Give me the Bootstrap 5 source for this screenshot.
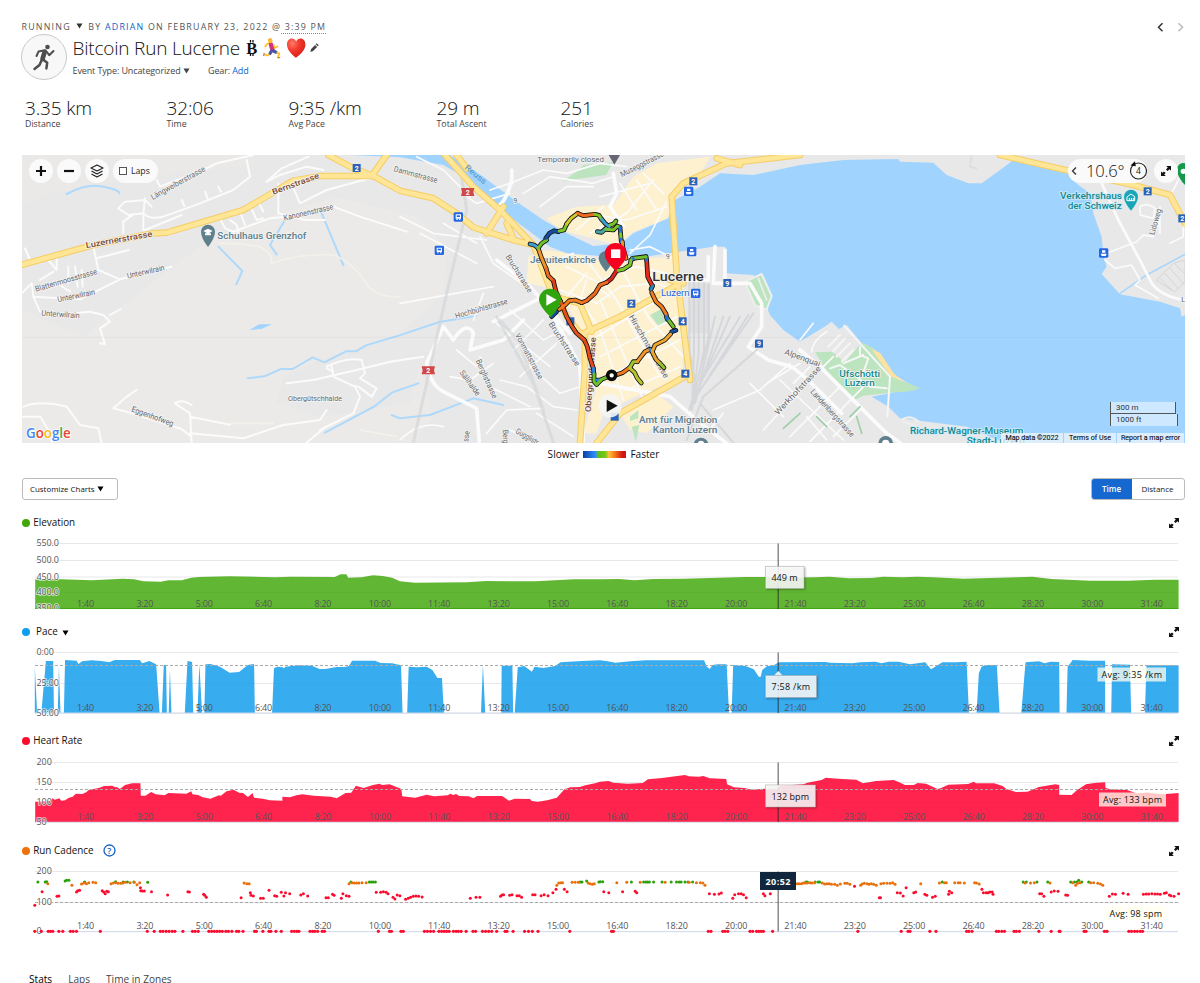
<!DOCTYPE html>
<html lang="en">
<head>
<meta charset="utf-8">
<title>Bitcoin Run Lucerne</title>
<meta name="viewport" content="width=device-width, initial-scale=1">
<link href="https://cdn.jsdelivr.net/npm/bootstrap@5.3.0/dist/css/bootstrap.min.css" rel="stylesheet">
<style>
body{font-family:"Open Sans",sans-serif;font-size:10px;color:#222;background:#fff;line-height:1.2;height:983px;overflow:hidden}
a{color:#1261c9;text-decoration:none}
svg{display:block}
.page{padding:0 15px 0 22px}
.meta-line{height:34px;padding-top:20px;font-size:8.9px;line-height:13px;letter-spacing:1.2px;color:#555;white-space:nowrap}
.meta-line .at{border-bottom:1px dotted #888}
.avatar{width:46px;height:46px;border:1.5px solid #c9c9c9;border-radius:50%;background:#f8f8f8;margin-left:-1px}
.run-title{font-size:19px;font-weight:300;letter-spacing:-.2px;line-height:26px;height:28px;color:#111;white-space:nowrap}
.run-title .tt{width:167.5px}
.run-title svg{flex-shrink:0}
.run-sub{font-size:9px;line-height:14px;letter-spacing:-.04em;color:#444;white-space:nowrap;letter-spacing:-.12px}
.totals{height:75px;padding:17px 0 0 3px}
.totals b{display:block;font-size:19px;font-weight:300;line-height:22px;letter-spacing:-.15px;color:#111}
.totals span{display:block;font-size:8.8px;line-height:11px;color:#444}
.t1{width:141.5px}.t2{width:122px}.t3{width:148px}.t4{width:124px}
.map-box{height:288px;overflow:hidden}
.map-ctl{left:6.5px;top:4px;gap:4px}
.map-ctl-r{right:7px;top:4px;gap:7px}
.disc{width:24px;height:24px;border-radius:50%;background:#fafafa}
.pill{height:24px;border-radius:12px;background:#fafafa}
.map-foot{right:1px;bottom:0;height:10px;font:7.1px/10px Roboto,sans-serif;color:#111;gap:1px;-webkit-text-stroke:.1px #111}
.map-foot span{background:rgba(240,245,250,.75);text-align:center}
.scalebar{right:6px;bottom:17px;width:69px;font:8px/11px Roboto,sans-serif;color:#333}
.scalebar div{background:rgba(230,243,255,.65);border:1px solid #555;border-top:0;border-bottom:0;height:12px;padding-left:5px}
.legend-line{height:35px;padding-top:4px;font-size:10.1px;line-height:15px;color:#111}
.ramp{width:43px;height:7px;background:linear-gradient(90deg,#0b3fa5,#3193ff 30%,#5fbf14 35%,#76c71b 52%,#ffc13b 60%,#f36f13 76%,#d11414 92%)}
.bar-line{height:22px}
.cust{width:96px;height:22px;border:1px solid #bbb;border-radius:3px;font-size:7.9px;line-height:20px;padding-left:7px;color:#111}
.seg{width:94px;height:22px;border:1px solid #bbb;border-radius:3px;font-size:8px;line-height:20px;overflow:hidden;text-align:center;color:#222;margin-right:.5px}
.seg .on{width:40px;background:#1568cf;color:#fff;font-weight:600}
.chart-block{height:109.2px}
.chart-head{height:20px;font-size:9.9px;color:#111}
.dot{width:8px;height:8px;border-radius:50%}
.chart-block svg text{font-size:9px;fill:#555}
.halo{paint-order:stroke;stroke:#fff;stroke-opacity:.75;stroke-width:1.6px}
.tabs-line{font-size:10.1px;line-height:16px;padding:21.5px 0 0 7px;color:#444}
.map-box text{font-family:Roboto,sans-serif;fill:#66696d;font-size:24px;paint-order:stroke;stroke:#f4f4f4;stroke-width:5px;stroke-linejoin:round}
.map-box .brown{fill:#7b4a2a;font-weight:500}
.map-box .poi{fill:#5f7f8d;font-size:27px;font-weight:500}
.map-box .teal{fill:#138a8a;font-size:27px;font-weight:500}
</style>
</head>
<body>
<div class="page">
  <header>
    <div class="meta-line d-flex justify-content-between">
      <div style="margin-left:-.5px">RUNNING <svg class="d-inline-block" style="margin:0 2px 3px 1.500px" width="7" height="6"><path d="M.5 .5h6l-3 5z" fill="#333"/></svg> BY <a href="#">ADRIAN</a> ON FEBRUARY 23, 2022 @<span class="at"> 3:39 PM</span></div>
      <svg width="34" height="14" fill="none" stroke-width="1.500"><path d="M11.500 3.200L7.500 7.200l4 4" stroke="#333"/><path d="M27.500 3.200l4 4-4 4" stroke="#bbb"/></svg>
    </div>
    <div class="d-flex" style="height:46px">
      <div class="avatar d-flex align-items-center justify-content-center flex-shrink-0">
        <svg width="24" height="28" viewBox="0 0 24 28" fill="none" stroke="#4d4d4d" stroke-linejoin="round" stroke-linecap="round"><circle cx="15.500" cy="4" r="2.300" fill="#4d4d4d" stroke="none"/><path d="M12.800 8.500L10.500 16" stroke-width="4.600"/><path d="M11.500 7.600L6.500 8.600l-2 4.400M15 9l2.200 3.200L21.500 8" stroke-width="2"/><path d="M11 16.500l4.200 3.300-.8 5.600M9.500 17.500L7.500 22 2.500 26" stroke-width="2.500"/></svg>
      </div>
      <div style="padding-left:5.500px">
        <div class="run-title d-flex align-items-center"><span class="tt">Bitcoin Run Lucerne</span>
          <svg width="80" height="26" viewBox="240 35 80 26"><text x="246.300" y="53.500" font-family="Liberation Serif" font-weight="700" font-size="16.500" fill="#111">B</text><path d="M250.500 40v2.500M253 40v2.500M250.500 53.500v2.500M253 53.500v2.500" stroke="#111" stroke-width="1.300"/>
          <path d="M271 42.500l-4 1.500-1.800 2.500" fill="none" stroke="#ffc02e" stroke-width="1.800" stroke-linecap="round"/>
          <path d="M271 44.500l1.500 5" stroke="#d5347f" stroke-width="4.500" stroke-linecap="round"/>
          <circle cx="270.300" cy="40.800" r="2.300" fill="#ffc02e"/><path d="M267.800 40.800q.5-3.300 4-2.400l-2 1.200z" fill="#e89a1c"/>
          <path d="M274 45.500l1 2.500 2.500-1.500" fill="none" stroke="#ffc02e" stroke-width="1.700" stroke-linecap="round"/>
          <path d="M271.500 51L270 53.500M273.500 51l2.500 1.200" stroke="#4a53a6" stroke-width="3.200" stroke-linecap="round"/>
          <path d="M269.300 54.300l-2 1.200-2.500-1.200M276.500 52.600l2.600.8-.9 3.600" fill="none" stroke="#ffc02e" stroke-width="1.900"/><path d="M264.300 53l-.7 3M277.200 57.600h3" stroke="#c98322" stroke-width="1.300"/>
          <defs><radialGradient id="hg" cx=".3" cy=".25" r=".9"><stop offset="0" stop-color="#ff7a68"/><stop offset=".4" stop-color="#f33a2c"/><stop offset="1" stop-color="#cf1717"/></radialGradient></defs>
          <path d="M296.200 58C290 53 287 49 287 44.500c0-3.500 2-6 4.800-6 2 0 3.500 1 4.400 3 .9-2 2.400-3 4.400-3 2.800 0 4.800 2.500 4.800 6 0 4.500-3 8.500-9.800 13.500z" fill="url(#hg)"/>
          <path d="M310.300 52l.8-3 4-4 2 2-4 4zM315.700 44.300l1-1 2 2-1 1z" fill="#444"/></svg>
        </div>
        <div class="run-sub d-flex" style="padding-top:2px"><span style="width:135.500px">Event Type: Uncategorized <svg class="d-inline-block" style="margin-bottom:2px" width="7" height="6"><path d="M.5 .5h6l-3 5z" fill="#444"/></svg></span><span>Gear: <a href="#">Add</a></span></div>
      </div>
    </div>
    <div class="totals d-flex">
      <div class="t1"><b>3.35 km</b><span>Distance</span></div><div class="t2"><b>32:06</b><span>Time</span></div><div class="t3"><b>9:35 /km</b><span>Avg Pace</span></div><div class="t4"><b>29 m</b><span>Total Ascent</span></div><div><b>251</b><span>Calories</span></div>
    </div>
  </header>

  <section class="map-box position-relative">
    <svg width="1163" height="288" viewBox="66 15 3489 864" preserveAspectRatio="none" fill="none" stroke-linejoin="round" stroke-linecap="round">
      <rect x="66" y="15" width="3489" height="864" fill="#e8e8e8"/>
      <!-- open land west of the town -->
      <path d="M66 480L250 560 480 380 640 260 840 190 1010 140 1250 200 1340 290 1330 430 1200 550 960 630 850 680 830 760 960 800 1230 760 1260 640 1300 800 1240 879H66z" fill="#ebeae8"/>
      <path d="M180 15h620l-60 30-270 30-330 60-74 30V15z" fill="#eae9e8"/>
      <!-- old and new town -->
      <g fill="#fdf1d0" transform="translate(1200)">
        <path d="M440 205L530 170 640 165 700 80 770 40 930 20 900 75 830 120 805 205 700 245 650 285 540 255 480 240z"/>
        <path d="M385 320L440 300 570 320 640 345 740 325 830 320 850 400 845 540 850 680 720 735 600 790 590 730 555 570 480 420 380 400z"/>
        <path d="M660 790l110-60 50 40-80 80-50-10zM590 710l20 80-20 60h-40z"/>
      </g>
      <g fill="#bbe4bf" transform="translate(1200)">
        <path d="M550 45l90-8-22 38-130 18 40-26zM750 495l40-22 25 38-40 16zM690 800l25-20v25l-25 8zM695 830l23-5-10 50z"/>
      </g>
      <!-- Reuss and the lake -->
      <path transform="translate(1200)" fill="#a0d4ff" d="M-150 15H150L250 80 350 155 430 210 500 250 580 288 665 280 700 250 805 205 815 175 825 150 900 110 960 70 1060 75 1200 45 1330 30 1495 27 1500 35 1600 38 1640 75 1705 100 1745 100 1800 60 1840 30 1900 38 2000 65 2035 105 2070 130 2080 190 2105 260 2110 315 2120 350 2105 372 2160 433 2280 455 2340 475 2345 500 2355 495V879H1815L1700 830 1500 805 1465 770 1415 740 1470 725 1540 710 1470 670 1425 600 1385 580 1340 525 1310 540 1295 515 1275 530 1200 575 1150 540 1110 495 1060 375 975 370V290H940L750 318 600 318 500 310 450 290 330 200 250 130 200 85 130 45 0 22z"/>
      <path d="M200 132Q260 100 310 110T357 130M655 290l72 73-18 40M965 190l65 155M855 210l-45 75 20 28M743 685l50-6 50-22h35l60-35 35 15 65-33h30l30-18 100-30 120-40 110-18M975 848l75-40 75-40 50-40 80-28M1175 795l25 10 90-10 130-50 90 20" stroke="#aed9fb" stroke-width="6"/>
      <path d="M748 540l30-17h38l-32 14z" fill="#a0d4ff"/><path d="M3360 430l80-55 115-62" stroke="#a9d7fb" stroke-width="5"/>
      <!-- lakeside parks and marina -->
      <g transform="translate(2400)">
        <path d="M-165 395l50-23 30 66-15 40-35-12z" fill="#bbe4bf" stroke="#eee" stroke-width="6"/><path d="M-150 400l35 60M-125 385l25 65" stroke="#eee" stroke-width="5"/>
        <path d="M0 575l75-45 20-15 20 20-45 62 50 50 65-67 40 20 50 70 68 40-73 20-60 10-30 10 80 40 40 60-260-60L0 680z" fill="#e8e8e8"/>
        <path d="M45 607l50-2 40 32 50-60 35 17 55 85 85 35q-25 13-75 13l-95 10-25 12-75-70z" fill="#bbe4bf"/>
        <path d="M215 598l25 10 40 60 30 28-38-18-35-48z" fill="#fde2a0"/>
        <path d="M85 590l35-35M100 603l35-38M110 620l40-40M125 635l35-35M132 527L270 680l-8 120M130 640l60-25M90 655l30-10 90 65 50 5M180 590v25l25 10-18 50" stroke="#f6f6f6" stroke-width="6"/>
        <path d="M305 810q25-18 50 5M310 815l40 15" stroke="#eee" stroke-width="7"/>
      </g>
      <!-- minor streets -->
      <g stroke="#fbfbfb" stroke-width="6">
        <path d="M455 170l-20-20-60 5-20 20 30 20 45-5 5-45M370 250v-35l30-22M430 190q20 20 60 10l110-40 100-40 50-40-10-50M430 190v50M435 240l110-45M610 60l40-20 110-25M470 90l10 20 130-50M545 150l8 18M615 125l10 25M655 110l8 15M800 95l40-20 80-25 50 10M800 95l45-40 80-35M835 100v90l80 20 60 0M870 90l30 70 80-40 130-35M720 185l15 40M750 165l20 45 20-5M775 155l15 30M690 210l20 15 10 35M660 205l15 30 25 10 110-40 50-5 140-30 80 30 140 45M75 295l15 35M145 330l25 30v-40M280 290l15 70 65 28 155-38M290 325l97-25M360 388l-120 60-140-8-5-40-30 30M100 440l20 45 50 10 100-10 40 10 20 20-30 20 15 48-15-3M330 495l32-18M205 350v50M225 350l8 60M245 360l3 50M120 390l40-25M180 405l30 20"/>
        <path d="M66 800h55l30 50 5 28M70 770q50-20 130 0l40 55 55 10 10 45M340 775l40-35 30-20M340 775l45 12 160 50 25 20M525 760q20-15 50 5M525 760l45 30 5 90M570 800l120 24M570 850l160 15 120-40 110-15 20-30M860 700l80-10 130-30 100-25 100-15M980 650q60-30 105-20l10 40-15 15 50 30-15 25-40-30-25-5M995 650l5 30 65 30 15 30-20 50-100 50M980 655l20 10M920 878l60-50"/>
      </g>
      <path d="M660 280q80 0 120 10 40 20 35 50 80-30 190-25 60 30 90 80 30 50 105 45M690 820l130 0M1080 840l110 20" stroke="#f3f1ea" stroke-width="5"/>
      <g stroke="#fbfbfb" transform="translate(1200)">
        <path d="M335 90q-15 60-40 80M335 60v40M640 70l10 60-20 40 40 60M430 440l-90 45-60 30M290 330l100 80 70 80 50 60M130 530L80 640q10 70 60 90l90 45 8 104M130 530l30 40q40-60 60-20l-10 50 100-30 60-60M460 500l50 90 30 60 10 230M600 700l210 40 80 70 90 70M975 300v100M940 400h110l35 60v70l-40 60 60 40 70 20 50 40 100 100M925 320v70h-70M945 290l-5 110" stroke-width="11"/>
        <path d="M270 120l60-20 100-40 70 10 100-30 80 10M370 130l80-50 130 20 60-20M420 170l80-60 80 0M200 140l30 20 100-30M50 20l80 40 80 80M0 200l100 50 160 20M130 220l100 60M240 260l40 80 140 100M60 250l170 90M0 460l280-50M250 430l-30 80M290 520l160 130M330 480l100 90 100-50M340 600l90-90M360 680l110-100M380 640l100 90 60-20M240 620l30 90 120 60M170 600l60 50M150 680l60 10 70-50M300 690l80 20 80 60 70 10M260 850l60-70 110-5M330 840l80 38M410 790l110 70M0 870q60-60 130-40M520 310l-100 40M480 330l-70 10M500 350l100 50 40-30 70-20 90 20M560 370l-60 70M560 330l90 120 130 230M650 330l100 180 100 110M600 450l130 300M590 560l200-120M600 620l230-120M620 680l220-110M680 720l160-70M560 390l-20 60 60 90 70 210M480 420l110 40 70-50 110-10 80 30M590 410l40 30M830 330l-80-40-60 10M560 190l120 20 120-40M600 140l150-40M660 100l50 80M710 90l60 90M730 70l60 60M570 250l110-60 80-100M530 240l80-70M690 310l60-55 50-100M940 780l140-60 90-80M1100 700l100-60M970 790l-50 60M1050 700l100 100M1090 840l110-120 100-100" stroke-width="5"/>
      </g>
      <g stroke="#fbfbfb" transform="translate(2400)" stroke-width="5">
        <path d="M0 600l60 50 200 200 70 50" stroke-width="11"/>
        <path d="M-20 700l50-50M-60 690L130 870M-30 860L120 710M20 800l60 70M0 670l100 100M30 875L200 700M100 860l80-80M0 570l40-50M35 605q0-30 45-60"/>
        <path d="M905 100l50 110 70 130 30 60q30 40 100 50" stroke-width="8"/>
        <path d="M920 310l90-35 20-20 30 5 20-50M915 330l30 25 50-10 25 45-15 15 70 40M1020 170q20-15 45 5l-5 30-40-10zM1110 280l40-20v-60M1140 80l-25 50M1080 250v-80"/>
        <path d="M515 20l-5 30 20 5" stroke="#ddd"/>
      </g>
      <path d="M3470 390l50-50 35-10v65l-30 30zM3480 385l35 35M3495 370l40 45M3510 355l45 50M3525 342l30 30" stroke="#ccc" stroke-width="2"/>
      <path d="M2550 800l30-30M2450 800l30 30M2570 800l15 50M2350 835l50-45" stroke="#9fd0a8" stroke-width="5"/>
      <!-- railway fan -->
      <g stroke="#cfd2d6" stroke-width="6" transform="translate(1200)">
        <path d="M875 400h55v150h-65z" fill="#dfe0e2" stroke="none"/>
        <path d="M868 395V600l20 110-20 70M882 390V600l-5 150M896 400V610l-18 150M912 400V600l-37 180M926 405V560l-50 200M945 500l-60 260M970 500l-85 250M990 500l-110 250M1045 495L885 745M1060 490L880 750M1020 500L900 700M1070 600l-160 140-50 130M900 760l100 118" opacity=".75"/>
        <path d="M290 500l110 200 60 178M300 510l60 70 70 200M180 50l20 130-60 250L40 878" opacity=".6" stroke-width="9"/>
      </g>
      <!-- main roads -->
      <g stroke="#f5cd66" stroke-width="20"><path id="mainroads" d="M66 344L280 285 460 250 500 248 730 180 880 92 960 78H1115L1160 15M985 15L1060 55 1120 78 1200 122 1300 145 1370 190 1420 232 1540 270 1600 285M1335 15L1420 110 1500 180 1600 285M1460 250l50-80M1540 265l-20-45M1600 285L1700 500 1740 550M1600 285L1660 440 1740 460 1775 545M1750 550L1860 500 2040 400M1370 15l30 40M1755 560v90L1740 879M1790 879L1860 790 2055 680M2070 690L2030 370 2015 140 2050 100 2180 40 2400 15M2150 25l70 20M2010 390l40 10M3000 15L3130 45 3220 65 3400 105 3510 135 3555 220"/></g>
      <use href="#mainroads" stroke="#ffe596" stroke-width="14"/>
      <path d="M66 562H3555" stroke="#000" stroke-opacity=".06" stroke-width="2"/>
      <!-- road shields and transit stops -->
      <g id="shields"></g>
      <g>
        <path d="M603 245a21 21 0 1 1 42 0q0 18-21 46-21-28-21-46z" fill="#5f7f8d"/><path d="M610 243l14-7 14 7-14 8zM615 250h18v6h-18z" fill="#fff"/>
        <path d="M1796 325a22 22 0 1 1 44 0q0 14-22 40-22-26-22-40z" fill="#5f7f8d"/>
        <path d="M1826 15h34l-17 29z" fill="#667"/><circle cx="2103" cy="885" r="22" fill="#5f7f8d"/><circle cx="2103" cy="882" r="10" fill="#fff"/><circle cx="2657" cy="880" r="22" fill="#5f7f8d"/><circle cx="2657" cy="880" r="11" fill="#fff"/>
        <path d="M3372 140a21 21 0 1 1 42 0q0 16-21 42-21-26-21-42z" fill="#18a6b8"/><path d="M3382 140l11-8 11 8v12h-22zM3388 145v7M3394 145v7M3400 145v7" stroke="#fff" stroke-width="3"/>
        <path d="M3530 60q5-25 25-20v65q-20-20-25-45z" fill="#149a4a"/><circle cx="3550" cy="64" r="8" fill="#fff"/>
      </g>
      <g id="maplabels"></g>
      <!-- recorded track -->
      <g id="track" transform="translate(1200)"></g>
      <g transform="translate(1200)">
        <path d="M417 449a33 33 0 1 1 66 0q0 18-31 53-35-35-35-53z" fill="#2fa40c"/><path d="M439 432l31 17-31 18z" fill="#fff"/>
        <path d="M614 312a33 33 0 1 1 66 0q0 20-33 51-33-31-33-51z" fill="#f8001f"/><path d="M633 298h28v26h-28z" fill="#fff"/>
        <circle cx="635" cy="676" r="12" stroke="#0a0a0a" stroke-width="11" fill="#fff"/>
        <circle cx="630" cy="767" r="35" fill="#f5f5f5" fill-opacity=".9"/><path d="M620 749l33 18-33 19z" fill="#111"/>
      </g>
      <text x="78" y="863" textLength="134" lengthAdjust="spacingAndGlyphs" style="font-family:'Open Sans';font-size:42px;font-weight:600;stroke:#fff;stroke-width:5px"><tspan style="fill:#4285f4">G</tspan><tspan style="fill:#ea4335">o</tspan><tspan style="fill:#fbbc05">o</tspan><tspan style="fill:#4285f4">g</tspan><tspan style="fill:#34a853">l</tspan><tspan style="fill:#ea4335">e</tspan></text>
    </svg>
    <div class="map-ctl position-absolute d-flex">
      <span class="disc"><svg width="24" height="24" stroke="#111" stroke-width="2.200"><path d="M7 12h10M12 7v10"/></svg></span>
      <span class="disc"><svg width="24" height="24" stroke="#111" stroke-width="2.200"><path d="M7 12h10"/></svg></span>
      <span class="disc"><svg width="24" height="24" fill="none" stroke="#222" stroke-width="1.200" stroke-linejoin="round"><path d="M12 6l6 3-6 3-6-3zM6.500 12L12 15l5.500-3M6.500 15l5.500 3 5.500-3"/></svg></span>
      <span class="pill d-flex align-items-center" style="width:45px;padding-left:6.500px;font-size:8.700px"><i style="width:8px;height:8px;border:1px solid #555;background:#fff;margin-right:4px"></i>Laps</span>
    </div>
    <div class="map-ctl-r position-absolute d-flex">
      <span class="pill d-flex align-items-center" style="width:79px"><svg width="18" height="24" fill="none" stroke="#333" stroke-width="1.300"><path d="M8 8.500L4.500 12 8 15.500"/></svg><span style="font-size:16.500px;font-weight:300;width:38px;color:#111;letter-spacing:-.2px">10.6°</span>
        <svg width="23" height="24" viewBox="0 0 23 24"><circle cx="14.500" cy="12" r="8" fill="none" stroke="#222" stroke-width="1.100"/><path d="M6.500 6.500l4.500-4.200.8 5z" fill="#111"/><text x="12" y="15.200" style="font:8.500px 'Open Sans';fill:#111;stroke:none">4</text></svg></span>
      <span class="disc"><svg width="24" height="24"><use href="#expand" x="7" y="7"/></svg></span>
    </div>
    <div class="scalebar position-absolute"><div style="width:66px;border-bottom:1px solid #555">300 m</div><div style="width:68px">1000 ft</div></div>
    <div class="map-foot position-absolute d-flex"><span style="width:62px">Map data ©2022</span><span style="width:52px">Terms of Use</span><span style="width:67px">Report a map error</span></div>
  </section>

  <div class="legend-line d-flex justify-content-center"><span class="d-flex align-items-center" style="gap:4px;height:15px">Slower <i class="ramp"></i> Faster</span></div>
  <div class="bar-line d-flex justify-content-between">
    <div class="cust">Customize Charts <svg class="d-inline-block" style="margin-bottom:1px" width="7" height="6"><path d="M.5 .5h6l-3 5z"/></svg></div>
    <div class="seg d-flex"><span class="on">Time</span><span class="flex-fill">Distance</span></div>
  </div>

  <div style="padding-top:13px" id="charts"></div>
  <div class="tabs-line d-flex" style="gap:16px"><span class="text-black">Stats</span><span>Laps</span><span>Time in Zones</span></div>
</div>
<svg width="0" height="0" class="position-absolute"><defs><g id="expand"><path d="M5.200 0H10v4.600L8.400 3.200 6.600 5 5 3.400 6.800 1.600zM4.800 10H0V5.400l1.600 1.400 1.400-1.400 1.600 1.600-1.400 1.400z" fill="#111"/></g></defs></svg>

<script>
const X=x=>(x/2.6133).toFixed(1);
const times=['1:40','3:20','5:00','6:40','8:20','10:00','11:40','13:20','15:00','16:40','18:20','20:00','21:40','23:20','25:00','26:40','28:20','30:00','31:40'];
const elev='M92 415V328L160 328 240 331 320 326 350 328 375 334 420 335 440 331 475 331 500 323 520 321 600 319 690 321 720 322 760 320 875 321 890 313 905 313 910 323 945 322 975 316 1000 318 1025 323 1045 334 1085 338 1220 337 1270 333 1400 334 1450 331 1500 328 1568 328 1618 327 1658 331 1708 327 1788 326 1948 321 1998 321 2048 323 2128 322 2168 320 2218 325 2278 324 2308 320 2358 322 2398 320 2438 322 2518 326 2658 322 2698 320 2748 327 2848 332 2948 332 3018 329 3080 329V415z';
const pace='M91 728V590L97 728zM108 728L120 573H139L141 728zM151 728L154 590 158 728zM167 728L170 570 200 572 205 582 215 574 240 571 265 573 285 577 300 570 365 570 372 580 390 573 408 583 417 728zM423 728L428 585H434L436 728zM441 728L444 600 448 728zM483 728L490 573 502 576 505 728zM516 728L521 582 528 728zM534 728L537 583 550 582 575 590 600 608 625 606 640 592 650 584 664 582 666 728zM711 728L716 595 725 590 738 592 743 595 745 590 780 586 815 587 835 597 850 597 880 591 900 591 912 588 920 572H980L995 579 1025 580 1048 586 1052 728zM1064 728L1068 590 1090 592 1115 590 1130 600 1143 624 1155 624 1160 728zM1257 728L1262 584 1268 728zM1310 728L1311 587H1339L1341 728zM1345 728L1353 592 1370 588 1390 605 1397 590 1420 594 1450 588 1465 577 1520 573 1568 571 1588 574 1608 578 1648 574 1688 571 1840 571 1847 590 1855 597 1862 585 1875 583 1899 583 1905 728zM1912 728L1916 585 1948 588 1970 598 1983 620 1988 620 1992 600 2005 588 2020 587 2035 577 2158 576 2168 578 2228 580 2248 577 2288 575 2303 580 2323 575 2348 575 2378 583 2418 577 2433 598 2463 577 2498 577 2526 575 2532 728zM2552 728L2558 610 2565 590 2575 585 2605 585 2612 728zM2669 728L2680 577 2715 574 2730 580 2745 575 2768 576 2769 728zM2787 728L2790 590 2800 575 2803 570 2848 572 2888 572V728zM2904 728L2906 583 2953 584 2956 728zM2992 728L2996 586 3080 586V728z';
const hr='M92 291V230H98L130 228 137 220 143 224 155 220 160 227 170 226 180 218 190 215 198 206 215 207 225 202 232 195 260 188 272 183 293 182 302 187 305 186 313 192 327 180 345 175 367 175 368 212H380L395 201 407 208 430 211 440 204 487 206 500 199 503 208 518 210 530 217 550 221 572 211 577 212 592 199 610 194 625 203 635 204 648 216 660 204 664 218 687 221 705 226 738 227 738 215 757 217 775 211 790 208 820 212 865 215 880 220 903 204 918 203 930 182 950 189 975 180 992 176 998 180 1018 178 1049 192 1051 214 1085 218 1115 209 1135 214 1170 211 1177 206 1184 210 1192 207 1200 213 1225 214 1237 220 1247 213 1312 213 1320 219 1330 227 1345 221 1385 222 1390 228 1405 230 1430 226 1455 218 1475 193 1490 187 1515 186 1530 181 1555 175 1568 170 1590 168 1603 173 1640 176 1680 174 1693 163 1730 159 1790 150 1800 154 1826 155 1838 153 1855 160 1898 162 1900 178 1918 187 1945 189 1965 194 1995 191 2030 193 2040 182 2100 178 2110 173 2147 165 2158 158 2200 162 2238 164 2255 175 2290 168 2335 165 2350 172 2365 180 2388 180 2398 174 2420 176 2450 192 2458 190 2478 179 2530 177 2545 170 2550 175 2598 175 2620 183 2630 192 2655 201 2685 200 2715 186 2758 178 2768 180 2768 209 2800 210 2815 195 2838 178 2860 174 2888 172 2889 188 2900 193 2945 195 2970 205 3000 203 3035 208 3055 206 3080 204V291z';
const dots={
'#2ca00a':'99,471 118,471 122,470 170,468 174,466 180,466 221,471 302,470 322,471 333,471 350,471 386,472 917,471 965,471 970,471 975,471 981,471 1516,471 1521,471 1533,468 1565,471 1569,470 1575,470 1650,471 1682,471 1688,471 1692,471 1697,471 1708,471 1730,471 1754,471 1768,471 1775,471 1780,471 1790,471 1798,471 1810,471 2106,471 2110,471 2130,471 2138,471 2142,471 2462,471 2674,471 2682,471 2710,471 2738,471 2798,471 2808,471 2814,471 2819,466 2827,471 2845,471',
'#e8700c':'125,476 188,481 213,477 219,474 226,476 232,473 243,472 250,473 290,476 296,474 303,473 309,475 316,475 321,474 327,472 340,473 351,472 358,479 365,473 638,474 645,476 651,476 912,476 920,473 926,474 932,474 938,474 946,473 957,473 1455,481 1460,474 1466,473 1470,473 1495,472 1503,472 1511,472 1537,474 1542,476 1548,478 1553,476 1612,473 1638,472 1673,472 1738,472 1801,472 1820,473 1830,473 1837,474 1842,481 2083,476 2088,476 2094,476 2099,474 2104,474 2110,474 2117,473 2122,474 2129,473 2149,474 2155,477 2161,476 2167,476 2173,478 2181,478 2188,481 2196,477 2208,475 2214,475 2221,478 2249,481 2253,477 2259,475 2266,476 2271,478 2277,476 2283,478 2290,481 2302,476 2309,475 2318,475 2326,475 2333,473 2339,478 2406,476 2455,474 2468,473 2473,473 2495,473 2504,473 2509,473 2520,474 2547,473 2552,474 2559,477 2679,474 2693,474 2703,473 2744,474 2803,473 2811,481 2816,475 2822,473 2850,473 2858,473 2869,475 2876,477 2882,481',
'#fb0b2d':'110,500 149,514 154,513 200,501 203,497 208,496 267,497 271,501 275,506 279,499 283,500 367,488 368,497 372,498 377,498 396,500 438,510 491,500 495,501 532,508 535,511 539,517 91,541 630,518 654,503 656,511 662,513 681,520 688,520 703,496 718,512 723,514 735,502 742,513 746,503 757,506 786,510 793,506 804,513 852,518 858,518 869,508 873,511 892,520 896,506 905,512 912,514 983,502 995,502 1002,500 1009,502 1014,506 1027,517 1032,522 1038,510 1045,512 1060,523 1067,520 1073,517 1080,514 1087,513 1094,514 1103,516 1229,520 1244,517 1254,517 1308,514 1312,510 1316,509 1332,511 1338,509 1351,512 1357,512 1363,517 1392,509 1398,509 1414,512 1422,509 1432,512 1445,503 1453,493 1475,493 1482,500 1578,500 1591,503 1627,500 1660,499 1664,503 1854,506 1867,508 1879,507 1885,504 1915,520 1920,509 1930,506 1937,506 1943,509 1950,518 1995,506 1999,512 2013,506 2233,484 2298,518 2301,518 2345,503 2353,504 2360,513 2368,488 2388,503 2393,501 2417,508 2422,511 2437,517 2444,514 2479,508 2481,499 2487,503 2566,493 2570,503 2577,503 2582,503 2587,501 2593,501 2595,508 2717,506 2722,506 2728,514 2747,501 2755,498 2765,499 2785,510 2790,511 2899,514 2907,507 2915,508 2935,505 2948,508 2988,508 2995,507 3002,507 3010,506 3018,507 3025,507 3032,508 3043,505 3048,503 3056,510 3060,512 3068,514 3080,506'};
const zero=[91,108,126,132,138,154,164,184,191,200,262,385,403,419,426,434,442,450,457,478,503,510,518,546,553,560,567,574,581,590,597,606,618,624,635,665,670,687,703,708,721,735,762,769,776,781,810,817,823,830,842,848,989,1018,1023,1048,1054,1109,1117,1125,1133,1147,1154,1161,1167,1174,1185,1192,1198,1205,1218,1236,1243,1261,1269,1277,1285,1298,1320,1325,1341,1371,1381,1391,1406,1489,1598,1603,1851,1858,1889,1895,1902,1960,1967,1977,1983,1989,1995,2019,2242,2355,2373,2378,2430,2446,2526,2532,2540,2604,2610,2618,2625,2650,2656,2664,2715,2747,2768,2770,2833,2838,2886,2893,2950,2957,2965,2972,2980,2986];
function tip(x,y,w,label,bg){return `<rect x="${x}" y="${y}" width="${w}" height="22" fill="${bg}" stroke="#aaa" stroke-width=".5" style="filter:drop-shadow(1px 1px 1px rgba(0,0,0,.35))"/><text x="${x+6}" y="${y+14.5}" textLength="${w-12.5}" style="fill:#111">${label}</text>`}
function avg(x,y,w,label){return `<rect x="${x}" y="${y}" width="${w}" height="14" fill="#fffff0" fill-opacity=".75"/><text x="${x+4}" y="${y+10.5}" textLength="${w-8}" style="fill:#111">${label}</text>`}
const charts=[
 {name:'Elevation',c:'#41a80a',top:533,grid:[[543.5,'550.0'],[560.5,'500.0'],[577,'450.0'],[592.5,'400.0'],[608,'350.0']],bottom:609,ty:607,
  body:`<g transform="translate(0 470) scale(.38266 .33333)"><path d="${elev}" fill="#41a80a" fill-opacity=".83"/></g><path d="M35 608.500H1178.500" stroke="#41a80a" stroke-width="1.200"/>`,
  over:tip(765.5,566.5,38.5,'449 m','rgba(255,255,255,.86)')},
 {name:'Pace',c:'#119cec',top:642,grid:[[652.5,'0:00'],[683.5,'25:00'],[713,'50:00']],bottom:713,ty:710.5,dash:665.5,gap:1,
  body:`<g transform="translate(0 470) scale(.38266 .33333)"><path d="${pace}" fill="#119cec" fill-opacity=".84"/></g>`,
  over:`<path d="M774 675.500l4.300-4.500 4.300 4.500z" fill="#e6f3fb"/>`+tip(765.5,675.5,51,'7:58 /km','rgba(255,255,255,.86)')+avg(1097.5,667.5,68.5,'Avg: 9:35 /km')},
 {name:'Heart Rate',c:'#fb0b2d',top:751,grid:[[762.5,'200'],[782.5,'150'],[802.5,'100'],[822,'50']],bottom:822,ty:819.7,dash:789.5,
  body:`<g transform="translate(0 725) scale(.38266 .33333)"><path d="${hr}" fill="#ff0030" fill-opacity=".86"/></g>`,
  over:tip(765.5,785,50,'132 bpm','rgba(255,255,255,.86)')+avg(1099,792.5,67,'Avg: 133 bpm')},
 {name:'Run Cadence',c:'#ee720b',top:861,grid:[[871.5,'200'],[902.5,'100'],[931.5,'0']],bottom:931.5,ty:928.5,dash:902.5,help:1,
  body:'',dots:1,
  over:`<rect x="760" y="872" width="36" height="18" fill="#10263d"/><text x="765.500" y="884.500" textLength="25" style="fill:#fff;font-weight:700">20:52</text>`+avg(1105.5,906,60.5,'Avg: 98 spm')}
];
document.getElementById('charts').innerHTML=charts.map((c,n)=>{
 let s=c.grid.map(g=>`<path d="M35 ${g[0]}H1178" stroke="#e8e8eb"/>`).join('')+c.body;
 if(n)s+=`<path d="M35 ${c.bottom+.2}H1178" stroke="#c9d4e8" stroke-width=".8"/>`;
 if(c.dash)s+=`<path d="M35 ${c.dash}H1178" stroke="#aaa" stroke-dasharray="3 2"/>`;
 s+=`<defs><clipPath id="plot${n}"><path d="M22 ${c.top}h1163V${c.bottom+(n==0?0:5)}H22z"/></clipPath></defs><g clip-path="url(#plot${n})">`+c.grid.map(g=>`<text class="halo" x="36.500" y="${g[0]+2.6}" textLength="${g[1].length==5?22.5:g[1].length==4?17.5:g[1].length*5.1}">${g[1]}</text>`).join('')+'</g>';
 s+=times.map((t,i)=>{const w=t.length==4?17:22.3,mid=i<5?85.6+59.35*i:379.9+59.37*(i-5);return `<text x="${(mid-w/2).toFixed(1)}" y="${c.ty}" textLength="${w}">${t}</text>`}).join('');
 if(c.dots){for(const k in dots)s+=dots[k].split(' ').map(p=>{const[a,b]=p.split(',');return `<circle cx="${X(a)}" cy="${(725+b/3).toFixed(1)}" r="1.500" fill="${k}"/>`}).join('');
  s+=zero.map(a=>`<circle cx="${X(a)}" cy="931.300" r="1.600" fill="#fb0b2d"/>`).join('')}
 s+=`<path d="M778.200 ${c.grid[0][0]}V${c.bottom}" stroke="#222" stroke-opacity=".65" stroke-width="1.200"/>`+c.over;
 const help=c.help?'<svg width="13" height="13" style="margin-left:9px"><circle cx="6.500" cy="6.500" r="5.500" fill="none" stroke="#1261c9" stroke-width="1.300"/><text x="4.300" y="9.800" style="font-size:9px;font-weight:600;fill:#1261c9">?</text></svg>':'';
 return `<div class="chart-block"><div class="chart-head d-flex align-items-center"><i class="dot" style="background:${c.c}"></i><span style="margin-left:${c.gap?6:3.2}px">${c.name}</span>${c.gap?'<svg width="7" height="6" style="margin:2px 0 0 4.500px"><path d="M.5 .5h6l-3 5z"/></svg>':''}${help}<svg width="10" height="10" class="ms-auto" style="margin-right:6px"><use href="#expand"/></svg></div>
 <svg width="1163" height="80" viewBox="22 ${c.top} 1163 80">${s}</svg></div>`}).join('');

/* track: colour followed by a run of points */
const track=[['#3d9fd0','390,282 402,285 414,293'],['#f0952a','414,293 425,325 438,355'],['#ef6a1f','438,355 445,378 460,392'],['#df3c1c','460,392 468,425 482,455'],['#e4501c','482,455 490,475 500,500 515,528 530,550 553,570'],['#e6481c','553,570 562,590 570,625 580,655'],['#2b86e0','580,655 582,672'],['#6fc02a','582,672 582,695 590,703'],['#2b86e0','590,690 603,690'],['#6fc02a','590,703 605,688 632,677'],['#ef7a1f','650,674 668,668 690,652'],['#9cc530','690,652 700,635 712,635'],['#f0952a','712,635 735,605 750,598'],['#2b86e0','750,598 757,604'],['#f0a52f','757,604 765,585 795,570 812,552'],['#174ea0','815,545 828,541'],['#6fc02a','820,530 800,503'],['#2b6fd0','802,508 798,492'],['#ef7a1f','798,492 785,470 768,455 755,428'],['#2b86c0','753,418 758,407'],['#df2c1c','754,402 743,380 740,330'],['#2b6fd0','740,330 738,320'],['#6fc02a','738,320 715,323 697,325'],['#2b6fd0','700,326 693,330'],['#7cc52a','693,330 690,345 670,358 650,362'],['#d8281c','648,365 635,385 620,397'],['#ef6a1f','620,397 600,405 585,430 560,452 545,458'],['#ef7a1f','545,458 525,450 508,452 497,463 478,478'],['#174ea0','470,485 455,500'],['#6fc02a','414,295 425,280 440,270'],['#174ea0','437,265 448,250 462,242 475,245'],['#7cc52a','478,243 492,240 500,222'],['#d3c92f','500,222 513,205 533,190'],['#ef6a1f','533,190 550,197 585,193'],['#7cc52a','585,193 597,196 605,208'],['#3d9fd0','605,208 615,220 628,230'],['#46a8a0','592,245 605,247 618,235'],['#7cc52a','618,238 640,240 652,228 660,232'],['#7cc52a','630,225 640,222 648,213'],['#2b6fd0','660,232 662,252'],['#7cc52a','662,252 663,265'],['#2b6fd0','663,268 664,275'],['#f0952a','667,275 668,290 678,325'],['#b5c530','690,655 704,668 712,685 724,699'],['#e8a52f','757,606 768,628 780,640'],['#8cc52a','780,640 792,653']];
document.getElementById('track').innerHTML='<g stroke="#111" stroke-width="14">'+track.map(t=>`<polyline points="${t[1]}"/>`).join('')+'</g><g stroke-width="9">'+track.map(t=>`<polyline points="${t[1]}" stroke="${t[0]}"/>`).join('')+'</g>';

/* street and place names: text, x, y, length, angle, class */
const L=[['Längweiberstrasse',458,150,182,-29],['Bernstrasse',820,134,148,-20,'brown'],['Luzernerstrasse',259,294,202,-10,'brown'],['Kanonenstrasse',853,212,152,-13],['Schulhaus Grenzhof',652,268,267,0,'poi'],['Blattenmoosstrasse',108,425,192,-16],['Unterwilrain',383,386,115,-13],['Unterwilrain',174,457,115,-12],['Unterwilrain',124,497,115,4],['Eggenhofweg',393,784,132,20],['Obergütschhalde',864,754,162,0],
['Reuss',1393,55,76,40,'riv'],['Dammstrasse',1180,64,135,15],['Temporarily closed',1612,37,200,0],['Museggstrasse',1866,82,142,-27],['Jesuitenkirche',1590,338,198,0,'poi'],['Bruchstrasse',1516,320,130,58],['Hochbühlstrasse',1368,506,162,-16],['Bruchstrasse',1645,522,152,57],['Vonmattstrasse',1545,555,152,62],['Berglistrasse',1427,632,126,66],['Sälihalde',1378,668,88,54],['Obergrundstrasse',1772,787,225,-86,'brown'],['Hirschmattstrasse',1886,500,215,60],['Gugglistr',1545,848,75,30],['Bergl',1508,840,45,88],['sse',1405,876,32,-82],['9',1540,160,12,0],['9',1997,327,12,0],
['Lucerne',1957,393,154,0,'city'],['Luzern',1983,439,86,0,'stn'],['Amt für Migration',1917,818,235,0,'poi'],['Kanton Luzern',1958,848,194,0,'poi'],['Alpenquai',2352,612,112,20],['Werkhofstrasse',2334,796,190,-47],['Landenbergstrasse',2430,726,184,48],['Lidoweg',3463,256,80,-74],['Verkehrshaus',3180,147,186,0,'teal'],['der Schweiz',3203,176,162,0,'teal'],['Ufschötti',2518,680,122,0,'teal'],['Luzern',2534,709,90,0,'teal'],['Richard-Wagner-Museum',2730,853,340,0,'teal'],['Stadt-Luzern',2900,883,175,0,'teal'],['L',3544,456,12,0]];
document.getElementById('maplabels').innerHTML=L.map(([t,x,y,l,r,c])=>`<text transform="translate(${x} ${y}) rotate(${r})" textLength="${l}" lengthAdjust="spacingAndGlyphs" class="${c||''}" ${c=='city'?'style="font-size:38px;font-weight:500;fill:#333"':c=='stn'?'style="font-size:26px;fill:#2b66d9"':c=='riv'?'style="fill:#4f8fc9;stroke:none"':c=='teal'&&x>2700?'style="stroke:#cfeaff"':''}>${t}</text>`).join('');
/* blue road numbers, red motorway numbers, transit stops */
const S=[['2',1070,54],['2',2080,94],['2',1894,461],['4',2048,514],['4',2056,671],['9',2182,399],['9',2277,581],['2',3443,124],['2',3547,205],['',1711,514],['',1844,800]];
let sh=S.map(([t,x,y])=>`<rect x="${x-12}" y="${y-12}" width="24" height="24" fill="#2a62b8"/><text x="${x-6}" y="${y+8}" style="fill:#fff;stroke:none;font-size:21px;font-weight:700">${t}</text>`).join('');
sh+=[[1403,126],[1285,661]].map(([x,y])=>`<path d="M${x-20} ${y-12}h40l-3 12 3 12h-40l3-12z" fill="#d04848"/><text x="${x-6}" y="${y+8}" style="fill:#fff;stroke:none;font-size:21px;font-weight:700">2</text>`).join('');
sh+=[[1375,201,0],[1318,301,0],[2087,430,0],[2066,124,1],[2075,305,1],[3311,309,1]].map(([x,y,b])=>`<rect x="${x-14}" y="${y-14}" width="28" height="28" rx="4" fill="#2467e4"/>`+(b?`<path d="M${x-9} ${y+2}h18l-3 7h-12zM${x-5} ${y-1}v-7h10v7z" fill="#fff"/>`:`<path d="M${x-8} ${y-8}h16v13h-16zM${x-6} ${y+6}h4v3h-4zM${x+2} ${y+6}h4v3h-4z" fill="#fff"/><path d="M${x-5} ${y-5}h10v5h-10z" fill="#2467e4"/>`)).join('');
document.getElementById('shields').innerHTML=sh;
</script>
<script src="https://cdn.jsdelivr.net/npm/bootstrap@5.3.0/dist/js/bootstrap.bundle.min.js"></script>
</body>
</html>
